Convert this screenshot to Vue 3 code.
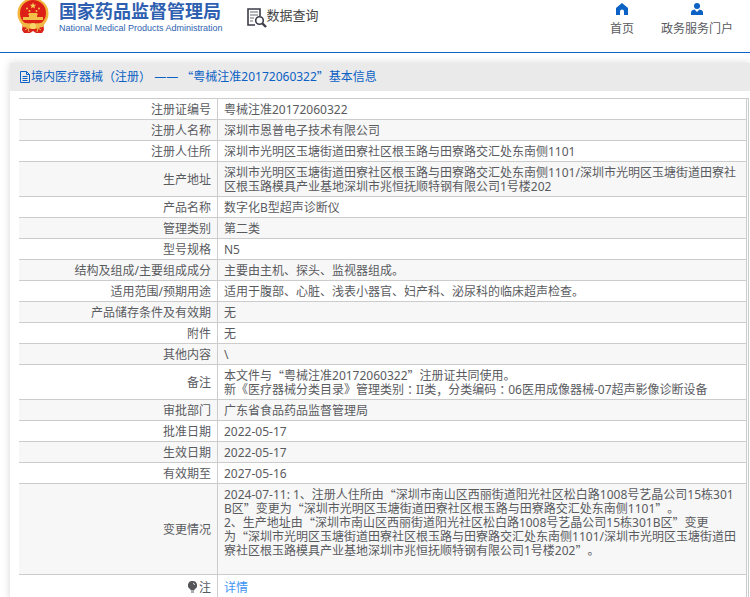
<script setup>
const split = (text) => text.split(/([“”（）：，])/).filter(Boolean)
const kind = (part) => ({
  wide: /^[“”，]/.test(part),
  centred: /^[（）：]/.test(part),
})

const title = '境内医疗器械（注册） —— “粤械注准20172060322”基本信息'

const rows = [
  ['注册证编号', ['粤械注准20172060322']],
  ['注册人名称', ['深圳市恩普电子技术有限公司']],
  ['注册人住所', ['深圳市光明区玉塘街道田寮社区根玉路与田寮路交汇处东南侧1101']],
  ['生产地址', ['深圳市光明区玉塘街道田寮社区根玉路与田寮路交汇处东南侧1101/深圳市光明区玉塘街道田寮社区根玉路模具产业基地深圳市兆恒抚顺特钢有限公司1号楼202']],
  ['产品名称', ['数字化B型超声诊断仪']],
  ['管理类别', ['第二类']],
  ['型号规格', ['N5']],
  ['结构及组成/主要组成成分', ['主要由主机、探头、监视器组成。']],
  ['适用范围/预期用途', ['适用于腹部、心脏、浅表小器官、妇产科、泌尿科的临床超声检查。']],
  ['产品储存条件及有效期', ['无']],
  ['附件', ['无']],
  ['其他内容', ['\\']],
  ['备注', ['本文件与“粤械注准20172060322”注册证共同使用。', '新《医疗器械分类目录》管理类别：II类，分类编码：06医用成像器械-07超声影像诊断设备']],
  ['审批部门', ['广东省食品药品监督管理局']],
  ['批准日期', ['2022-05-17']],
  ['生效日期', ['2022-05-17']],
  ['有效期至', ['2027-05-16']],
  ['变更情况', [
    '2024-07-11: 1、注册人住所由“深圳市南山区西丽街道阳光社区松白路1008号艺晶公司15栋301B区”变更为“深圳市光明区玉塘街道田寮社区根玉路与田寮路交汇处东南侧1101”。',
    '2、生产地址由“深圳市南山区西丽街道阳光社区松白路1008号艺晶公司15栋301B区”变更为“深圳市光明区玉塘街道田寮社区根玉路与田寮路交汇处东南侧1101/深圳市光明区玉塘街道田寮社区根玉路模具产业基地深圳市兆恒抚顺特钢有限公司1号楼202”。',
    '',
  ]],
]
</script>

<template>
  <header class="top">
    <a class="brand" href="#">
      <svg class="emblem" viewBox="0 0 32 33" aria-hidden="true">
        <path d="M6 22h20l1 8-2 3h-6l-3-2-3 2H7l-2-3z" fill="#d9231c" />
        <circle cx="16" cy="13.500" r="15.500" fill="#f2b63c" />
        <circle cx="16" cy="13" r="13" fill="#dc2018" />
        <path d="M16 2.500l.9 2.200 2.400.1-1.900 1.500.7 2.300-2.100-1.300-2.100 1.300.7-2.300-1.900-1.500 2.400-.1z" fill="#f7cf52" />
        <g fill="#f3bf48">
          <circle cx="10" cy="8.500" r="1" /><circle cx="22" cy="8.500" r="1" />
          <circle cx="12.500" cy="11" r="1" /><circle cx="19.500" cy="11" r="1" />
          <path d="M12 13h8l1 2h-1v2h6v3H6v-3h6v-2h-1z" />
        </g>
        <path d="M4 22q12 3 24 0l-2 5q-5 1-7-1a3 3 0 0 1-6 0q-2 2-7 1z" fill="#f0b847" />
        <circle cx="16" cy="26" r="3" fill="#f8d568" />
        <path d="M8 30l3-2 1 4M24 30l-3-2-1 4" stroke="#f0b847" stroke-width="1" fill="none" />
      </svg>
      <span class="names">
        <strong class="cn">国家药品监督管理局</strong>
        <span class="en">National Medical Products Administration</span>
      </span>
    </a>
    <a class="query" href="#">
      <svg width="20" height="20" viewBox="0 0 20 20" fill="none" stroke="#3c3c4a" aria-hidden="true">
        <path d="M8 17H1V1h12v7" stroke-width="1.600" />
        <path d="M3 4h8M3 7h8M3 10h4M3 13h3" stroke-width="1.200" stroke="#6a6a74" />
        <circle cx="12.500" cy="12.500" r="3.800" stroke-width="1.600" />
        <path d="M15.500 15.500l3.500 3.500" stroke-width="2.400" />
      </svg>
      <span>数据查询</span>
    </a>
    <nav class="links">
      <a href="#">
        <svg width="14" height="12" viewBox="0 0 14 12" fill="#0b61c4" aria-hidden="true">
          <path d="M7 0l6 5v7H9V8.500a2 2 0 0 0-4 0V12H1V5z" />
        </svg>
        <span>首页</span>
      </a>
      <a href="#">
        <svg width="14" height="12" viewBox="0 0 14 12" fill="#0b61c4" aria-hidden="true">
          <circle cx="7" cy="3" r="3" />
          <path d="M1 12V9.500Q1 7 4.500 6.500L7 9l2.500-2.500Q13 7 13 9.500V12z" />
        </svg>
        <span>政务服务门户</span>
      </a>
    </nav>
  </header>
  <main class="panel">
    <h1 class="title">
      <svg width="10" height="12" viewBox="0 0 10 12" fill="none" stroke="#0b61c4" aria-hidden="true">
        <path d="M.5 .5h6l3 3v8h-9zM6.500 .5v3h3M2.500 5.500h5M2.500 7.500h5M2.500 9.500h5" />
      </svg>
      <span><span v-for="(p, i) in split(title)" :key="i" :class="kind(p)">{{ p }}</span></span>
    </h1>
    <div class="body">
      <table>
        <tbody>
          <tr v-for="[label, lines] in rows" :key="label">
            <th scope="row">{{ label }}</th>
            <td>
              <div v-for="(line, n) in lines" :key="n" class="line"><span v-for="(p, i) in split(line)" :key="i" :class="kind(p)">{{ p }}</span></div>
            </td>
          </tr>
          <tr class="note">
            <th scope="row">
              <svg width="9" height="12" viewBox="0 0 9 12" aria-hidden="true">
                <path d="M4.500 0a4.300 4.300 0 0 1 2.500 8L6 9.500H3L2 8a4.300 4.300 0 0 1 2.500-8z" fill="#55565a" />
                <path d="M3 11h3" stroke="#55565a" />
                <path d="M5 2q1.500.5 1.500 2" stroke="#ddd" fill="none" />
              </svg>注
            </th>
            <td><a href="#">详情</a></td>
          </tr>
        </tbody>
      </table>
    </div>
  </main>
</template>

<style>
body {
  margin: 0;
  overflow: hidden;
  background: #fff;
  font-family: "Noto Sans", "Noto Sans CJK SC", sans-serif;
  font-size: 12px;
  text-spacing-trim: space-all;
  color: #5a5b5f;
}
</style>

<style scoped>
a {
  color: inherit;
  text-decoration: none;
}
.top {
  display: flex;
  align-items: flex-start;
  box-sizing: border-box;
  height: 53px;
  padding: 0 17px;
  border-bottom: 1px solid #0b61c4;
}
.brand {
  display: flex;
  gap: 10px;
}
.emblem {
  width: 32px;
  height: 33px;
}
.names {
  display: flex;
  flex-direction: column;
  white-space: nowrap;
  color: #2f5fb0;
}
.cn {
  font-family: "Noto Sans CJK SC", sans-serif;
  font-size: 18px;
  line-height: 20px;
}
.en {
  font-family: "Liberation Sans", sans-serif;
  font-size: 9px;
  line-height: 16px;
}
.query {
  display: flex;
  margin: 8px 0 0 24px;
  color: #444;
  font-family: "Noto Sans CJK SC", sans-serif;
  font-size: 13px;
  line-height: 14px;
}
.links {
  display: flex;
  gap: 27px;
  margin-left: auto;
  padding-top: 3px;
}
.links a {
  display: flex;
  flex-direction: column;
  align-items: center;
  gap: 7px;
  line-height: 14px;
}
.panel {
  margin: 10px 0 0 10px;
  box-shadow: 0 0 8px rgba(0, 0, 0, 0.16);
}
.title {
  display: flex;
  align-items: center;
  gap: 1px;
  height: 28px;
  margin: 0;
  padding-left: 10px;
  background: #eaeaea;
  color: #0b61c4;
  font-size: 12px;
  font-weight: 400;
  line-height: 16px;
}
.body {
  margin-right: 1px;
  padding: 7px 0 0 9px;
  background: #fff;
}
table {
  box-sizing: border-box;
  width: 100%;
  border-collapse: separate;
  border-spacing: 0;
  border-top: 1px solid #ccc;
  border-right: 1px solid #ccc;
  padding-right: 1px;
}
tr:nth-child(even) {
  background: #f7f7f7;
}
th,
td {
  padding: 4px 6px 2px;
  border-right: 1px solid #ccc;
  border-bottom: 1px solid #ccc;
  line-height: 14px;
}
th {
  width: 186px;
  font-weight: 400;
  text-align: right;
}
td {
  text-align: left;
  word-break: break-all;
}
.line {
  min-height: 14px;
}
.wide {
  font-family: "Noto Sans CJK SC", sans-serif;
  vertical-align: top;
}
.centred {
  font-family: "Noto Sans CJK TC", sans-serif;
  vertical-align: top;
}
.note th,
.note td {
  padding-top: 6px;
  padding-bottom: 6px;
}
.note svg {
  margin-right: 2px;
  vertical-align: -1px;
}
.note a {
  color: #3d94f5;
}
</style>
